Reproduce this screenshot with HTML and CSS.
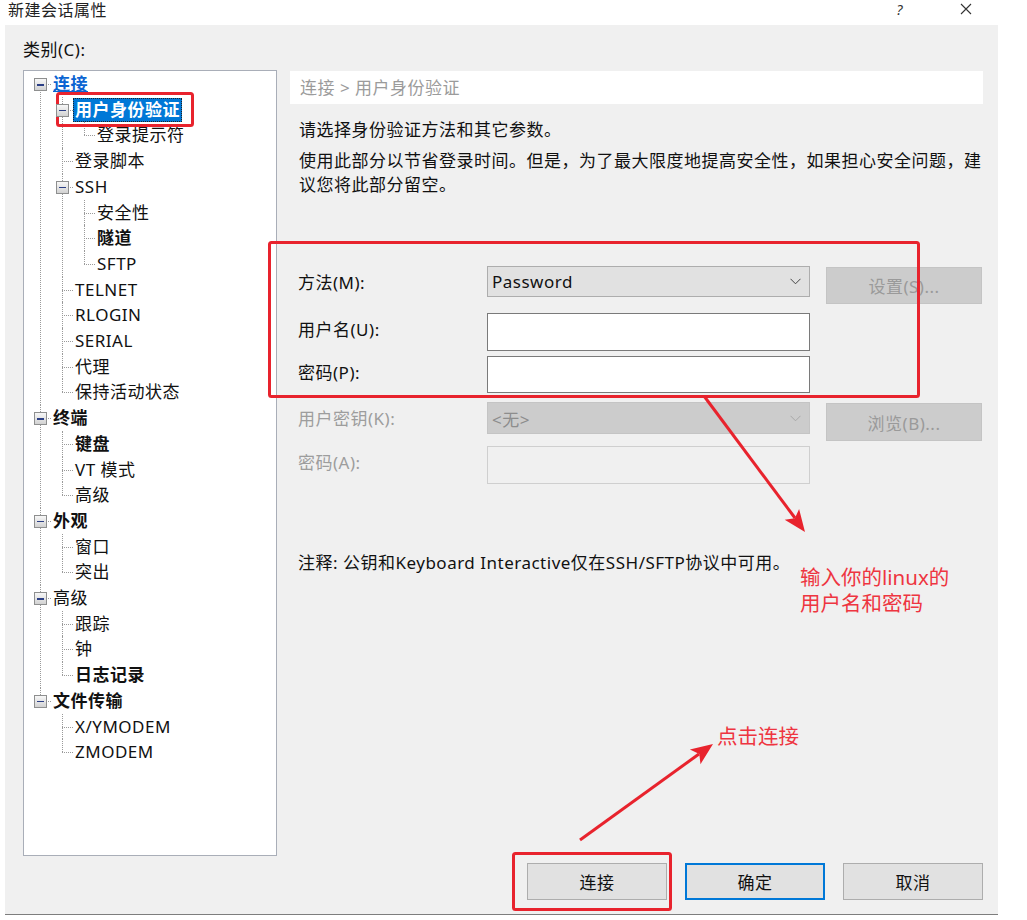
FILE: index.html
```html
<!DOCTYPE html>
<html lang="zh-CN">
<head>
    <meta charset="UTF-8">
    <title>新建会话属性</title>
    <link rel="stylesheet" href="styles.css">
</head>
<body>
    <div class="titlebar">
        <span class="title">新建会话属性</span>
        <span class="help">?</span>
        <svg class="close" width="12" height="12" viewBox="0 0 12 12"><path d="M1 1 L11 11 M11 1 L1 11" stroke="#333" stroke-width="1.1" fill="none"/></svg>
    </div>

    <div class="dialog">
        <!-- category tree -->
        <div class="side">
            <div class="cat-label">类别(C):</div>
            <div class="tree-box">
                <ul class="tree">
                    <li><span class="tog"></span><span class="lbl link">连接</span>
                        <ul>
                            <li><span class="tog"></span><span class="lbl sel">用户身份验证</span>
                                <ul>
                                    <li><span class="lbl">登录提示符</span></li>
                                </ul>
                            </li>
                            <li><span class="lbl">登录脚本</span></li>
                            <li><span class="tog"></span><span class="lbl">SSH</span>
                                <ul>
                                    <li><span class="lbl">安全性</span></li>
                                    <li><span class="lbl b">隧道</span></li>
                                    <li><span class="lbl">SFTP</span></li>
                                </ul>
                            </li>
                            <li><span class="lbl">TELNET</span></li>
                            <li><span class="lbl">RLOGIN</span></li>
                            <li><span class="lbl">SERIAL</span></li>
                            <li><span class="lbl">代理</span></li>
                            <li><span class="lbl">保持活动状态</span></li>
                        </ul>
                    </li>
                    <li><span class="tog"></span><span class="lbl b">终端</span>
                        <ul>
                            <li><span class="lbl b">键盘</span></li>
                            <li><span class="lbl">VT 模式</span></li>
                            <li><span class="lbl">高级</span></li>
                        </ul>
                    </li>
                    <li><span class="tog"></span><span class="lbl b">外观</span>
                        <ul>
                            <li><span class="lbl">窗口</span></li>
                            <li><span class="lbl">突出</span></li>
                        </ul>
                    </li>
                    <li><span class="tog"></span><span class="lbl">高级</span>
                        <ul>
                            <li><span class="lbl">跟踪</span></li>
                            <li><span class="lbl">钟</span></li>
                            <li><span class="lbl b">日志记录</span></li>
                        </ul>
                    </li>
                    <li><span class="tog"></span><span class="lbl b">文件传输</span>
                        <ul>
                            <li><span class="lbl">X/YMODEM</span></li>
                            <li><span class="lbl">ZMODEM</span></li>
                        </ul>
                    </li>
                </ul>
            </div>
        </div>

        <!-- settings page -->
        <div class="main">
            <div class="crumb">连接 &gt; 用户身份验证</div>
            <p class="intro first">请选择身份验证方法和其它参数。</p>
            <p class="intro">使用此部分以节省登录时间。但是，为了最大限度地提高安全性，如果担心安全问题，建议您将此部分留空。</p>

            <div class="form">
                <label class="f-label">方法(M):</label>
                <div class="select r1"><span>Password</span><svg width="11" height="7" viewBox="0 0 11 7"><path d="M0.5 0.8 L5.5 5.8 L10.5 0.8" stroke="#444" fill="none"/></svg></div>
                <button class="btn off r1b">设置(S)...</button>

                <label class="f-label">用户名(U):</label>
                <div class="input r2"></div>
                <div></div>

                <label class="f-label">密码(P):</label>
                <div class="input r3"></div>
                <div></div>

                <label class="f-label off">用户密钥(K):</label>
                <div class="select off r4"><span>&lt;无&gt;</span><svg width="11" height="7" viewBox="0 0 11 7"><path d="M0.5 0.8 L5.5 5.8 L10.5 0.8" stroke="#a8a8a8" fill="none"/></svg></div>
                <button class="btn off r4b">浏览(B)...</button>

                <label class="f-label off">密码(A):</label>
                <div class="input off r5"></div>
                <div></div>
            </div>

            <p class="note">注释: 公钥和Keyboard Interactive仅在SSH/SFTP协议中可用。</p>

            <div class="buttons">
                <button class="btn">连接</button>
                <button class="btn default">确定</button>
                <button class="btn">取消</button>
            </div>
        </div>
    </div>

    <!-- red annotations drawn over the screenshot -->
    <svg class="marks" width="1027" height="920" viewBox="0 0 1027 920">
        <g fill="none" stroke="#e8232d" stroke-width="3">
            <rect x="57.5" y="93.5" width="135" height="32" rx="2"/>
            <rect x="269.5" y="242.5" width="649" height="154" rx="2"/>
            <rect x="513.5" y="853.5" width="157" height="56" rx="2"/>
            <line x1="704" y1="396" x2="795" y2="518"/>
            <line x1="580" y1="840" x2="699" y2="754"/>
        </g>
        <g fill="#e8232d">
            <polygon points="805,532 784.7,519.7 794.9,518.3 799.1,508.9"/>
            <polygon points="713,744 689.9,749.6 699.3,754 700.5,764.2"/>
        </g>
    </svg>
    <div class="tip tip-login">输入你的linux的<br>用户名和密码</div>
    <div class="tip tip-connect">点击连接</div>
</body>
</html>
```

FILE: styles.css
```css
/* page */
body {
    margin: 0;
    background: #fff;
    font-family: "Noto Sans", "Noto Sans CJK SC", sans-serif;
    font-size: 17px;
    letter-spacing: 0.5px;
    color: #111;
    position: relative;
    width: 1027px;
    height: 920px;
    overflow: hidden;
}

.titlebar {
    height: 23px;
    padding-top: 2px;
    display: flex;
    align-items: flex-start;
    padding-left: 8px;
}

.title {
    font-size: 16px;
    line-height: 17px;
    color: #222;
    flex: 1;
}

.help {
    font-size: 14px;
    line-height: 16px;
    color: #333;
    margin-right: 57px;
    font-style: italic;
}

.close {
    margin: 1px 55px 0 0;
}

/* dialog body */
.dialog {
    margin-left: 5px;
    width: 993px;
    height: 889px;
    background: #f0f0f0;
    border-bottom: 1px solid #7d7d7d;
    display: flex;
}

.side {
    flex: none;
    width: 254px;
    padding-left: 18px;
    margin-right: 13px;
}

.cat-label {
    margin-top: 13px;
    line-height: 24px;
    height: 24px;
}

.tree-box {
    margin-top: 8px;
    height: 784px;
    background: #fff;
    border: 1px solid #a9aeb8;
}

/* tree */
.tree,
.tree ul {
    list-style: none;
    margin: 0;
    padding: 0;
}

.tree {
    padding: 0 0 0 7px;
}

.tree li {
    position: relative;
    padding-left: 22px;
    line-height: 25.7px;
}

.tree li::before {
    content: "";
    position: absolute;
    left: 9px;
    top: 0;
    bottom: 0;
    border-left: 1px dotted #9a9a9a;
}

.tree > li:first-child::before {
    top: 13px;
}

.tree li:last-child::before {
    bottom: auto;
    height: 13px;
}

.tree li::after {
    content: "";
    position: absolute;
    left: 9px;
    top: 13px;
    width: 11px;
    border-top: 1px dotted #9a9a9a;
}

.tog {
    position: absolute;
    left: 3px;
    top: 7px;
    width: 11px;
    height: 11px;
    border: 1px solid #8e8f8f;
    background: linear-gradient(#f7f7f7, #d2d2d2);
    z-index: 1;
}

.tog::after {
    content: "";
    position: absolute;
    left: 2px;
    top: 5px;
    width: 7px;
    height: 1.5px;
    background: #2c3f85;
}

.lbl {
    display: inline-block;
    height: 25.7px;
    color: #111;
}

.lbl.b {
    font-weight: bold;
}

.lbl.link {
    color: #0a64d2;
    font-weight: bold;
    text-decoration: underline;
}

.lbl.sel {
    background: #0078d7;
    color: #fff;
    font-weight: bold;
    margin-left: -2px;
    padding: 0 2px;
    height: 24px;
    line-height: 24px;
    outline: 1px dotted #222;
    outline-offset: -1px;
}

/* right page */
.main {
    flex: 1;
    min-width: 0;
    padding: 46px 15px 14px 0;
    display: flex;
    flex-direction: column;
}

.crumb {
    height: 33px;
    line-height: 33px;
    background: #fff;
    color: #9b9b9b;
    padding-left: 10px;
}

.intro {
    margin: 7px 0 0;
    padding-left: 9px;
    line-height: 24px;
}

.intro.first {
    margin-top: 14px;
}

.form {
    margin-top: 69px;
    display: grid;
    grid-template-columns: 173px 323px 156px;
    grid-template-rows: 47px 43px 46px 44px 38px;
    column-gap: 16px;
    align-items: start;
    padding-left: 8px;
}

.f-label {
    height: 34px;
    line-height: 34px;
}

.f-label.off {
    color: #9d9d9d;
}

.select {
    box-sizing: border-box;
    height: 31px;
    background: #e1e1e1;
    border: 1px solid #adadad;
    display: flex;
    align-items: center;
    justify-content: space-between;
    padding: 0 8px 0 4px;
}

.select.off {
    height: 32px;
    background: #cccccc;
    border-color: #c4c4c4;
    color: #8d8d8d;
}

.input {
    box-sizing: border-box;
    height: 37px;
    background: #fff;
    border: 1px solid #7a7a7a;
}

.input.r2 {
    height: 38px;
}

.input.off {
    height: 38px;
    background: #f0f0f0;
    border-color: #cfcfcf;
}

.btn {
    box-sizing: border-box;
    width: 140px;
    height: 37px;
    background: #e1e1e1;
    border: 1px solid #adadad;
    font-family: inherit;
    font-size: 17px;
    letter-spacing: inherit;
    color: #111;
    padding: 0;
}

.btn.off {
    width: 156px;
    background: #cccccc;
    border-color: #c4c4c4;
    color: #9a9a9a;
}

.r1b {
    margin-top: 1px;
}

.r4b {
    margin-top: 1px;
    height: 38px;
}

.btn.default {
    border: 2px solid #0078d7;
}

.note {
    margin: 67px 0 0;
    padding-left: 8px;
    line-height: 24px;
}

.buttons {
    margin-top: auto;
    display: flex;
    justify-content: flex-end;
    gap: 18px;
}

/* annotations */
.marks {
    position: absolute;
    left: 0;
    top: 0;
    pointer-events: none;
}

.tip {
    position: absolute;
    color: #ee3540;
    font-size: 20.5px;
    line-height: 26px;
    letter-spacing: 0;
}

.tip-login {
    left: 800px;
    top: 564px;
}

.tip-connect {
    left: 717px;
    top: 723px;
}
```
